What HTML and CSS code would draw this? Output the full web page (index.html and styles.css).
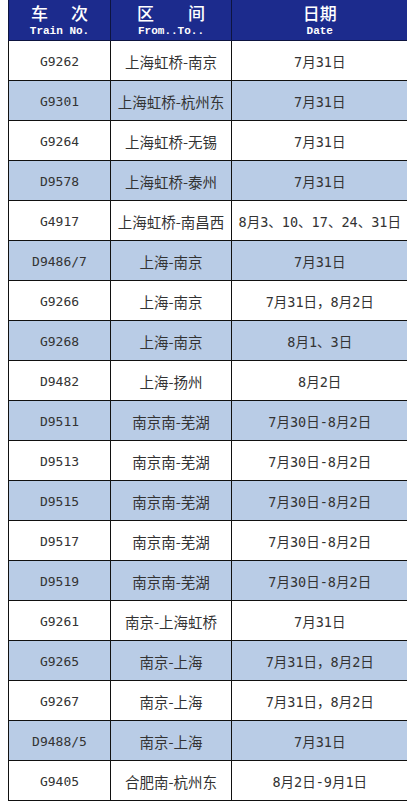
FILE: index.html
```html
<!DOCTYPE html>
<html>
<head>
<meta charset="utf-8">
<link rel="stylesheet" href="styles.css">
</head>
<body>
<table class="tt">
  <colgroup><col class="c1"><col class="c2"><col class="c3"></colgroup>
  <thead>
    <tr>
      <th><div class="zh">车<span class="sp"></span>次</div><div class="en">Train No.</div></th>
      <th><div class="zh">区<span class="sp2"></span>间</div><div class="en">From..To..</div></th>
      <th><div class="zh">日期</div><div class="en">Date</div></th>
    </tr>
  </thead>
  <tbody>
    <tr><td>G9262</td><td>上海虹桥-南京</td><td>7月31日</td></tr>
    <tr class="alt"><td>G9301</td><td>上海虹桥-杭州东</td><td>7月31日</td></tr>
    <tr><td>G9264</td><td>上海虹桥-无锡</td><td>7月31日</td></tr>
    <tr class="alt"><td>D9578</td><td>上海虹桥-泰州</td><td>7月31日</td></tr>
    <tr><td>G4917</td><td>上海虹桥-南昌西</td><td>8月3、10、17、24、31日</td></tr>
    <tr class="alt"><td>D9486/7</td><td>上海-南京</td><td>7月31日</td></tr>
    <tr><td>G9266</td><td>上海-南京</td><td>7月31日，8月2日</td></tr>
    <tr class="alt"><td>G9268</td><td>上海-南京</td><td>8月1、3日</td></tr>
    <tr><td>D9482</td><td>上海-扬州</td><td>8月2日</td></tr>
    <tr class="alt"><td>D9511</td><td>南京南-芜湖</td><td>7月30日-8月2日</td></tr>
    <tr><td>D9513</td><td>南京南-芜湖</td><td>7月30日-8月2日</td></tr>
    <tr class="alt"><td>D9515</td><td>南京南-芜湖</td><td>7月30日-8月2日</td></tr>
    <tr><td>D9517</td><td>南京南-芜湖</td><td>7月30日-8月2日</td></tr>
    <tr class="alt"><td>D9519</td><td>南京南-芜湖</td><td>7月30日-8月2日</td></tr>
    <tr><td>G9261</td><td>南京-上海虹桥</td><td>7月31日</td></tr>
    <tr class="alt"><td>G9265</td><td>南京-上海</td><td>7月31日，8月2日</td></tr>
    <tr><td>G9267</td><td>南京-上海</td><td>7月31日，8月2日</td></tr>
    <tr class="alt"><td>D9488/5</td><td>南京-上海</td><td>7月31日</td></tr>
    <tr><td>G9405</td><td>合肥南-杭州东</td><td>8月2日-9月1日</td></tr>
  </tbody>
</table>
</body>
</html>
```
FILE: styles.css
```css
html, body {
  margin: 0;
  padding: 0;
  background: #ffffff;
}
body {
  padding-left: 8px;
}
.tt {
  border-collapse: collapse;
  table-layout: fixed;
  width: 399px;
  font-family: "DejaVu Sans Mono", "Noto Sans CJK SC", monospace;
  color: #333333;
}
.c1 { width: 102px; }
.c2 { width: 121px; }
.c3 { width: 176px; }
.tt th {
  background: #1c2b8d;
  color: #ffffff;
  height: 40px;
  padding: 0;
  border: 1px solid #0d1440;
  border-top: none;
  text-align: center;
  vertical-align: middle;
}
.tt th:last-child, .tt td:last-child {
  border-right: none;
}
.zh {
  font-family: "Noto Sans CJK SC", sans-serif;
  font-size: 17px;
  font-weight: 500;
  line-height: 20px;
  display: flex;
  justify-content: center;
}
.sp { width: 23px; }
.sp2 { width: 34px; }
.en {
  font-family: "Liberation Mono", monospace;
  font-weight: bold;
  font-size: 11px;
  line-height: 14px;
  margin-top: 1px;
}
.tt td {
  box-sizing: border-box;
  height: 40px;
  padding: 2px 0 0 0;
  border: 1px solid #111111;
  text-align: center;
  vertical-align: middle;
  font-size: 13px;
  line-height: 18px;
  white-space: nowrap;
  overflow: hidden;
}
.tt td:nth-child(2) {
  font-family: "Noto Sans CJK SC", sans-serif;
  font-size: 14.5px;
}
.tt td:nth-child(3) {
  font-family: "DejaVu Sans Mono", "Noto Sans CJK SC", monospace;
  font-size: 13.5px;
}
.tt tr.alt td {
  background: #b9cce6;
}
```
